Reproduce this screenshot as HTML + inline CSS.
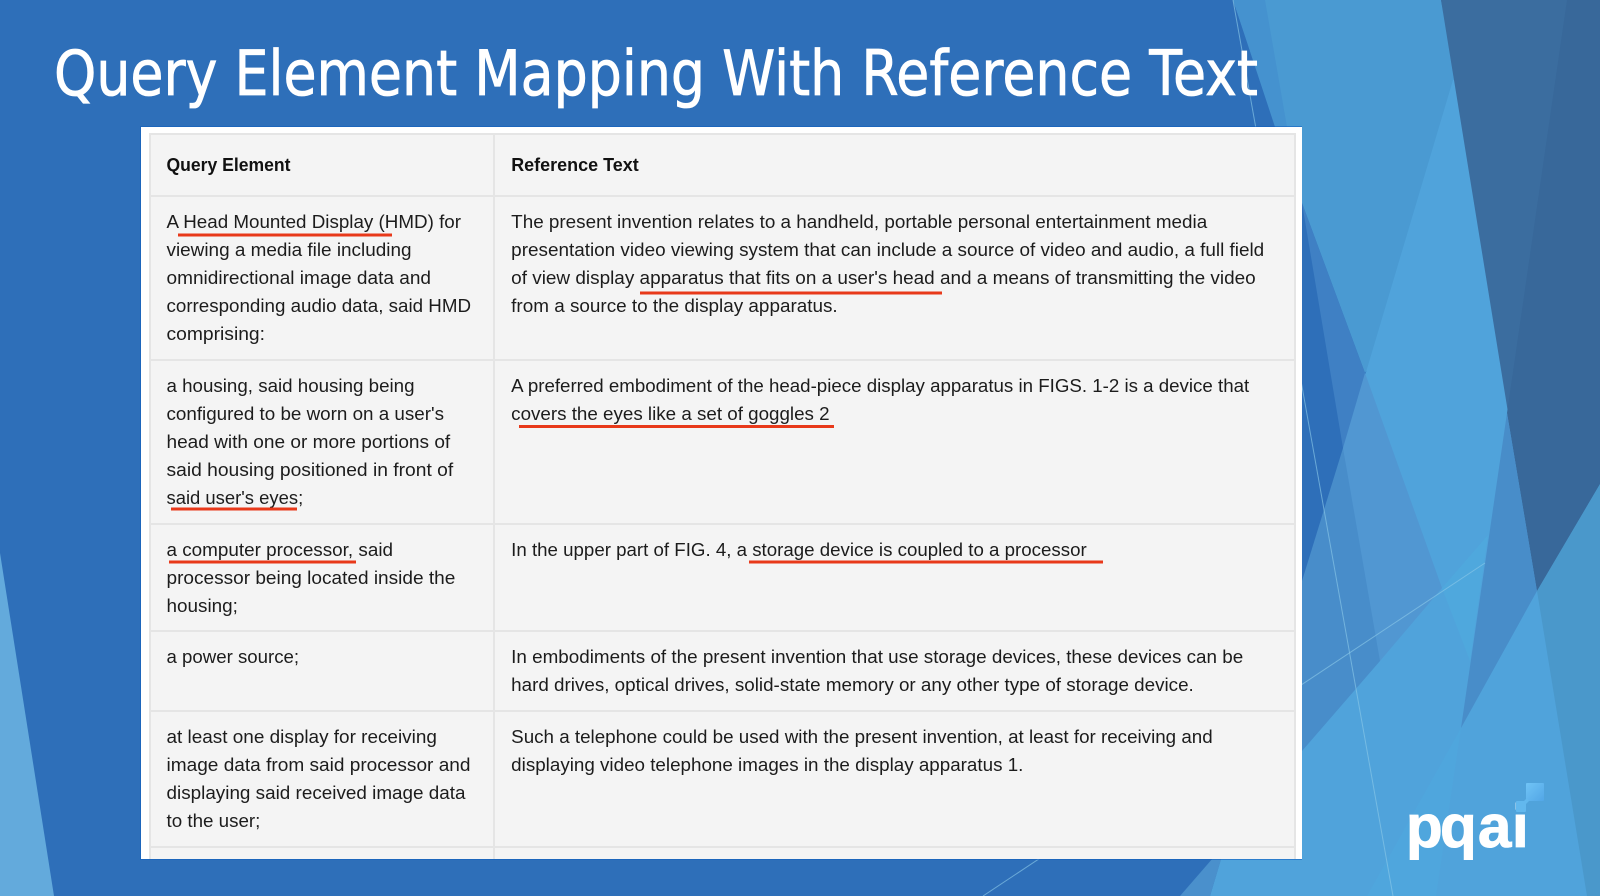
<!DOCTYPE html>
<html lang="en">
<head>
<meta charset="utf-8">
<title>Query Element Mapping With Reference Text</title>
<style>
html,body{margin:0;padding:0;width:1600px;height:896px;overflow:hidden;background:#2e6fb9}
svg{display:block}
.t{font-family:"Liberation Sans",sans-serif;font-size:18px;fill:#1c1c1c}
.b{font-weight:bold;fill:#111}
</style>
</head>
<body>
<svg xmlns="http://www.w3.org/2000/svg" width="1600" height="896" viewBox="0 0 1600 896">
<defs>
<linearGradient id="sq" x1="0" y1="0" x2="1" y2="1"><stop offset="0" stop-color="#70c4f6"/><stop offset="1" stop-color="#52a6e6"/></linearGradient>
</defs>
<rect width="1600" height="896" fill="#2e6fb9"/>
<polygon points="0,553 54,896 0,896" fill="#63aadc"/>
<!-- right background -->
<polygon points="1233,0 1441,0 1480,200 1365,373 1302,203" fill="#4a9ad2"/>
<polygon points="1233,0 1265,0 1287,127 1275,127" fill="#4592cf"/>
<polygon points="1302,203 1365,373 1390,400 1343,448" fill="#3f80c4"/>
<polygon points="1453,80 1600,80 1600,896 1210,896" fill="#50a3db"/>
<polygon points="1441,0 1600,0 1600,484 1537,591" fill="#3b6d9f"/>
<polygon points="1567,0 1600,0 1600,484 1537,591 1507,413" fill="#38689a"/>
<polygon points="1507,413 1537,591 1461,728" fill="#488dc9"/>
<polygon points="1537,591 1600,484 1600,896 1587,896" fill="#4a98cb"/>
<polygon points="1343,448 1400,500 1380,661 1302,751 1302,581" fill="#488dca"/>
<polygon points="1365,373 1442,588 1380,661 1343,448" fill="#5197d2"/>
<polygon points="1180,896 1226,843 1210,896" fill="#4a90cc"/>
<polygon points="1442,588 1488,535 1470,661" fill="#4fa8dd"/>
<polygon points="1461,728 1436,896 1367,896" fill="#4fa6dd"/>
<!-- thin lines -->
<line x1="1233" y1="0" x2="1393" y2="896" stroke="#8ac8e8" stroke-width="1" opacity=".65"/>
<line x1="983" y1="896" x2="1485" y2="563" stroke="#8ac8e8" stroke-width="1" opacity=".65"/>
<!-- title -->
<text x="54" y="95" font-family="'DejaVu Sans',sans-serif" font-size="62" fill="#fff" stroke="#fff" stroke-width=".8" textLength="1204" lengthAdjust="spacingAndGlyphs">Query Element Mapping With Reference Text</text>
<!-- table -->
<rect x="140" y="126" width="1162" height="734" fill="#0f5fc0" opacity=".55"/>
<rect x="141" y="127" width="1161" height="732" fill="#fff"/>
<rect x="149" y="133" width="1147" height="726" fill="#f4f4f4"/>
<g fill="#e5e5e5">
<rect x="149" y="133" width="1147" height="2"/>
<rect x="149" y="133" width="2" height="726"/>
<rect x="1294" y="133" width="2" height="726"/>
<rect x="493" y="133" width="2" height="726"/>
<rect x="149" y="195" width="1147" height="2"/>
<rect x="149" y="359" width="1147" height="2"/>
<rect x="149" y="523" width="1147" height="2"/>
<rect x="149" y="630" width="1147" height="2"/>
<rect x="149" y="710" width="1147" height="2"/>
<rect x="149" y="846" width="1147" height="2"/>
</g>
<!-- left column -->
<g class="t">
<text class="t b" x="166.5" y="171" textLength="124" lengthAdjust="spacingAndGlyphs">Query Element</text>
<text class="t" x="166.5" y="228" textLength="294.5" lengthAdjust="spacingAndGlyphs">A Head Mounted Display (HMD) for</text>
<text class="t" x="166.5" y="256" textLength="245" lengthAdjust="spacingAndGlyphs">viewing a media file including</text>
<text class="t" x="166.5" y="284" textLength="264.5" lengthAdjust="spacingAndGlyphs">omnidirectional image data and</text>
<text class="t" x="166.5" y="312" textLength="304.5" lengthAdjust="spacingAndGlyphs">corresponding audio data, said HMD</text>
<text class="t" x="166.5" y="340" textLength="98.5" lengthAdjust="spacingAndGlyphs">comprising:</text>
<text class="t" x="166.5" y="392" textLength="248" lengthAdjust="spacingAndGlyphs">a housing, said housing being</text>
<text class="t" x="166.5" y="420" textLength="277.5" lengthAdjust="spacingAndGlyphs">configured to be worn on a user's</text>
<text class="t" x="166.5" y="448" textLength="283.7" lengthAdjust="spacingAndGlyphs">head with one or more portions of</text>
<text class="t" x="166.5" y="476" textLength="286.7" lengthAdjust="spacingAndGlyphs">said housing positioned in front of</text>
<text class="t" x="166.5" y="504" textLength="136.7" lengthAdjust="spacingAndGlyphs">said user's eyes;</text>
<text class="t" x="166.5" y="556" textLength="226.5" lengthAdjust="spacingAndGlyphs">a computer processor, said</text>
<text class="t" x="166.5" y="584" textLength="288.8" lengthAdjust="spacingAndGlyphs">processor being located inside the</text>
<text class="t" x="166.5" y="612" textLength="71.4" lengthAdjust="spacingAndGlyphs">housing;</text>
<text class="t" x="166.5" y="663" textLength="132.6" lengthAdjust="spacingAndGlyphs">a power source;</text>
<text class="t" x="166.5" y="743" textLength="270.4" lengthAdjust="spacingAndGlyphs">at least one display for receiving</text>
<text class="t" x="166.5" y="771" textLength="304" lengthAdjust="spacingAndGlyphs">image data from said processor and</text>
<text class="t" x="166.5" y="799" textLength="299" lengthAdjust="spacingAndGlyphs">displaying said received image data</text>
<text class="t" x="166.5" y="827" textLength="93.9" lengthAdjust="spacingAndGlyphs">to the user;</text>
<!-- right column -->
<text class="t b" x="511.2" y="171" textLength="127.5" lengthAdjust="spacingAndGlyphs">Reference Text</text>
<text class="t" x="511.2" y="228" textLength="696" lengthAdjust="spacingAndGlyphs">The present invention relates to a handheld, portable personal entertainment media</text>
<text class="t" x="511.2" y="256" textLength="753" lengthAdjust="spacingAndGlyphs">presentation video viewing system that can include a source of video and audio, a full field</text>
<text class="t" x="511.2" y="284" textLength="744.5" lengthAdjust="spacingAndGlyphs">of view display apparatus that fits on a user's head and a means of transmitting the video</text>
<text class="t" x="511.2" y="312" textLength="326.5" lengthAdjust="spacingAndGlyphs">from a source to the display apparatus.</text>
<text class="t" x="511.2" y="392" textLength="738" lengthAdjust="spacingAndGlyphs">A preferred embodiment of the head-piece display apparatus in FIGS. 1-2 is a device that</text>
<text class="t" x="511.2" y="420" textLength="318.4" lengthAdjust="spacingAndGlyphs">covers the eyes like a set of goggles 2</text>
<text class="t" x="511.2" y="556" textLength="575.5" lengthAdjust="spacingAndGlyphs">In the upper part of FIG. 4, a storage device is coupled to a processor</text>
<text class="t" x="511.2" y="663" textLength="732" lengthAdjust="spacingAndGlyphs">In embodiments of the present invention that use storage devices, these devices can be</text>
<text class="t" x="511.2" y="691" textLength="682.6" lengthAdjust="spacingAndGlyphs">hard drives, optical drives, solid-state memory or any other type of storage device.</text>
<text class="t" x="511.2" y="743" textLength="701.5" lengthAdjust="spacingAndGlyphs">Such a telephone could be used with the present invention, at least for receiving and</text>
<text class="t" x="511.2" y="771" textLength="512.2" lengthAdjust="spacingAndGlyphs">displaying video telephone images in the display apparatus 1.</text>
</g>
<!-- red underlines -->
<g fill="#e8391a">
<rect x="178" y="233.5" width="214" height="3"/>
<rect x="640" y="291.5" width="302" height="3"/>
<rect x="519" y="425" width="315" height="3"/>
<rect x="171" y="507.5" width="126" height="3"/>
<rect x="169" y="560.5" width="187" height="3"/>
<rect x="749" y="560.5" width="354" height="3"/>
</g>
<!-- logo -->
<text y="847" x="1406 1440 1478 1512" font-family="'Liberation Sans',sans-serif" font-weight="bold" font-size="60" fill="#fff" stroke="#fff" stroke-width="1">pqai</text>
<rect x="1516" y="801" width="10" height="11" rx="1" fill="#62b8ee"/>
<rect x="1526" y="783" width="18" height="18" rx="1" fill="url(#sq)"/>
<polygon points="1523,802 1527,798 1529,801 1526,804" fill="#62b8ee"/>
</svg>
</body>
</html>
